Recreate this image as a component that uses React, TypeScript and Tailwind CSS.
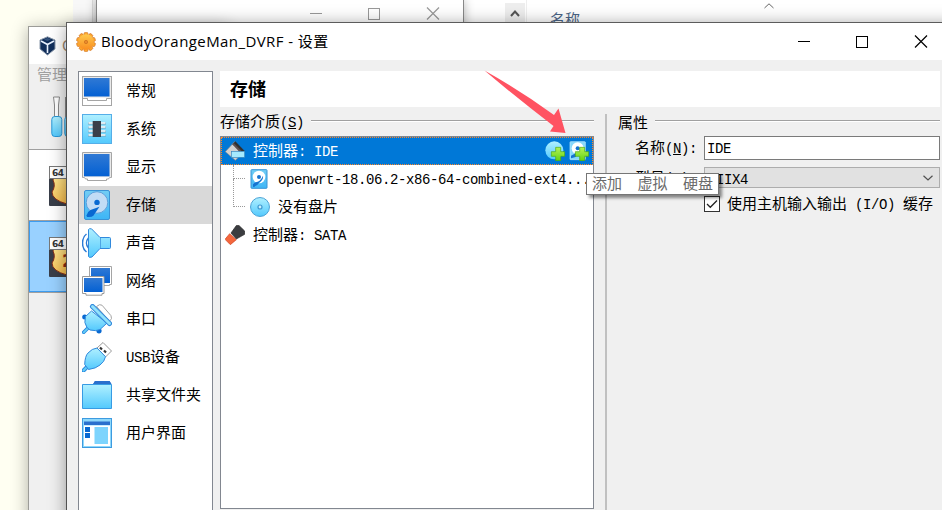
import React from "react";

type IconProps = { children: React.ReactNode; size?: string };

function Svg({ children, size = "h-[30px] w-[30px]" }: IconProps) {
  return (
    <svg viewBox="0 0 30 30" className={`${size} shrink-0`} fill="none">
      {children}
    </svg>
  );
}

function Defs() {
  return (
    <svg width="0" height="0" className="absolute">
      <defs>
        <linearGradient id="screen" x1="0" y1="0" x2="0" y2="1">
          <stop offset="0" stopColor="#3079d4" />
          <stop offset="1" stopColor="#0360d3" />
        </linearGradient>
        <linearGradient id="sky" x1="0" y1="0" x2="0" y2="1">
          <stop offset="0" stopColor="#b0f0ff" />
          <stop offset="1" stopColor="#53c9fd" />
        </linearGradient>
        <linearGradient id="deep" x1="0" y1="0" x2="0" y2="1">
          <stop offset="0" stopColor="#72cdf4" />
          <stop offset="1" stopColor="#3db5f6" />
        </linearGradient>
        <linearGradient id="gold" x1="0" y1="0" x2="1" y2="1">
          <stop offset="0" stopColor="#fff0a0" />
          <stop offset="1" stopColor="#f0a020" />
        </linearGradient>
        <linearGradient id="orange" x1="0" y1="0" x2="0" y2="1">
          <stop offset="0" stopColor="#ffc94d" />
          <stop offset="1" stopColor="#f98d20" />
        </linearGradient>
        <linearGradient id="green" x1="0" y1="0" x2="0" y2="1">
          <stop offset="0" stopColor="#b5f25a" />
          <stop offset="1" stopColor="#62d312" />
        </linearGradient>
      </defs>
    </svg>
  );
}

const GeneralIcon = () => (
  <Svg>
    <rect x=".5" y=".5" width="29" height="29" fill="#fff" stroke="#a5a5a5" />
    <path d="M1 22.5h4.5v2h19v-2H29" stroke="#a5a5a5" />
    <rect x="1.2" y="1.2" width="27.6" height="20.4" fill="#e4e4e4" />
    <rect x="2" y="2" width="25.5" height="18.5" fill="url(#screen)" />
  </Svg>
);
const SystemIcon = () => (
  <Svg>
    <rect x=".5" y=".5" width="29" height="29" fill="url(#sky)" stroke="#55aee8" />
    <path d="M6 9.5h18M6 13.5h18M6 17.5h18M6 21.5h18" stroke="#6fa3bd" strokeWidth="2" />
    <path d="M6.500 9h17M6.500 13h17M6.500 17h17M6.500 21h17" stroke="#fff" strokeWidth="1.300" />
    <rect x="10.7" y="7" width="8.3" height="16" fill="#3a3f4a" />
  </Svg>
);
const DisplayIcon = () => (
  <Svg>
    <path d="M.5.5h29v25h-2l-1 1.5h-2v1.5h-19V27H3.5l-1-1.5h-2z" fill="#fff" stroke="#a5a5a5" />
    <rect x="1.2" y="1.2" width="27.6" height="24" fill="#e4e4e4" />
    <rect x="2" y="2" width="25.5" height="22.3" fill="url(#screen)" />
  </Svg>
);
const StorageIcon = ({ size }: { size?: string }) => (
  <Svg size={size}>
    <rect x="2.5" y=".5" width="25" height="29" rx="1.5" fill="url(#deep)" stroke="#3b93d6" />
    <circle cx="15" cy="12.5" r="10.8" fill="#c2dcf5" stroke="#5c9fdc" />
    <circle cx="15" cy="12.4" r="2.7" fill="#0869d2" />
    <path d="M17.5 16.8 11.5 25.5Q10 27.5 5 27l-.5-1.5q1-4 4-5.5z" fill="#0869d2" />
  </Svg>
);
const AudioIcon = () => (
  <Svg>
    <path d="M4.5 6C-.8 10 -.8 20 4.5 24M6.5 10C3.8 13 3.8 17 6.5 20" stroke="#297ad6" strokeWidth="1.5" />
    <path d="M6.5 1.5Q7 .3 9.5.8L18 9.5h9.5q1 0 1 1v9q0 1-1 1H18L10 29q-3 1-3.5-.5z" fill="url(#sky)" stroke="#3189dc" />
    <path d="M18.5 10v10" stroke="#4ea5e5" />
  </Svg>
);
const NetworkIcon = () => (
  <Svg>
    <path d="M7.5.5h22v18h-2v1h-18v-1h-2z" fill="#fff" stroke="#a5a5a5" />
    <rect x="9" y="2" width="19" height="15" fill="url(#screen)" />
    <path d="M.5 10.5h21.5v17h-2v1.7H4v-1.7H.5z" fill="#fff" stroke="#9a9a9a" />
    <rect x="2" y="12" width="18.5" height="14" fill="url(#screen)" />
  </Svg>
);
const SerialIcon = () => (
  <Svg>
    <path d="m14.500 2.500 3-1.800 2.500.5 9 10.500.500 3-2 2.500z" fill="#fff" stroke="#a5a5a5" />
    <circle cx="2.7" cy="13" r="2.5" fill="#0869d2" />
    <circle cx="17" cy="26.8" r="2.6" fill="#0869d2" />
    <path d="m1.7 28.3 5-5" stroke="#298be0" strokeWidth="3.6" strokeLinecap="round" />
    <path d="m1.7 28.3 5-5" stroke="#65cef7" strokeWidth="1.800" strokeLinecap="round" />
    <path d="M9.500 7 3.500 12.500Q1.500 19 5 23.500L8 26q6 1.500 10-.5l7-6.500z" fill="url(#sky)" stroke="#3189dc" />
    <path d="M10.500 2.500 27.500 19.500" stroke="#3189dc" strokeWidth="5" strokeLinecap="round" />
    <path d="M10.500 2.500 27.500 19.500" stroke="#93e2fb" strokeWidth="3" strokeLinecap="round" />
  </Svg>
);
const UsbIcon = () => (
  <Svg>
    <path d="m15 6 6-5.5L29.5 9l-6 6z" fill="#fff" stroke="#999" />
    <path d="m18 5.500 2 2m2 1 2 2" stroke="#333" strokeWidth="2.2" />
    <path d="m1.5 28.5 4-4" stroke="#298be0" strokeWidth="4" strokeLinecap="round" />
    <path d="m1.5 28.5 4-4" stroke="#65cef7" strokeWidth="2" strokeLinecap="round" />
    <path d="M2.7 22.5Q3 14 6 11q4-4.5 9-5l8.5 8.7q-1 5-5.5 8.3-4 3.5-11.5 4.5z" fill="url(#sky)" stroke="#3189dc" />
  </Svg>
);
const FolderIcon = () => (
  <Svg>
    <path d="m11 4.500 2-3.500h14.500l2 3.500z" fill="#2a6fcc" />
    <path d="M.5 4.5h29v24H.5z" fill="url(#sky)" stroke="#379be4" />
    <path d="m11 4 2-3h14.500l2 3" fill="#2a6fcc" />
  </Svg>
);
const InterfaceIcon = () => (
  <Svg>
    <rect x=".5" y=".5" width="29" height="29" fill="#8ed8fb" stroke="#3d9be0" />
    <rect x="2" y="7.5" width="26" height="20.5" fill="#fff" />
    <rect x="2" y="3.5" width="26" height="3.5" fill="#2a70cd" />
    <rect x="3" y="9" width="5" height="5" fill="#0869d2" />
    <rect x="3" y="15" width="5" height="5" fill="#0869d2" />
    <rect x="12.5" y="9" width="13.5" height="17" fill="#7dd4fd" />
  </Svg>
);
const DiscIcon = () => (
  <Svg size="h-5 w-5">
    <circle cx="15" cy="15" r="14.2" fill="url(#sky)" stroke="#4ba2d6" strokeWidth="1.5" />
    <circle cx="15" cy="15" r="3" fill="#c9f0ff" stroke="#4199cf" strokeWidth="1.8" />
  </Svg>
);
const DriveIcon = () => (
  <Svg size="h-5 w-5">
    <rect x="3" y="1" width="24" height="28" rx="1" fill="url(#deep)" stroke="#3994d6" strokeWidth="1.5" />
    <circle cx="15" cy="12" r="9.5" fill="#fff" />
    <circle cx="15" cy="12" r="3" fill="#1673d0" />
    <path d="M21 10q1 6-6 11-3 5-9 6v-4q3-4 7-4 5-2 8-9z" fill="#1673d0" />
  </Svg>
);
const IdeIcon = () => (
  <Svg size="h-5 w-5">
    <path d="m.5 16 14-15 14.500 15-13.500 13z" fill="#d2d2d2" stroke="#8d8d8d" />
    <path d="m11 5 4.500-4.500L29.500 15l-5 1.500z" fill="#303030" />
    <path d="m11 5 2-2 12 12-3 2z" fill="#5d5050" />
    <rect x="9.500" y="15.500" width="20" height="9" fill="#a5eafe" stroke="#3584bd" />
  </Svg>
);
const SataIcon = () => (
  <Svg size="h-5 w-5">
    <path d="m7 13 10 9-9 7.5-8-8z" fill="#f4673d" stroke="#cf401e" />
    <path d="M9 12 17 .8h4L29.5 9v5L17 21z" fill="#3b3d40" stroke="#292929" />
  </Svg>
);
const Plus = () => <path d="M16 9.5h7.500v6.500h6v7h-6v6.500H16V23H9.500v-7H16z" fill="url(#green)" stroke="#4aa80e" />;
const AddDisc = () => (
  <Svg size="h-5 w-5">
    <circle cx="14" cy="14" r="13.5" fill="url(#sky)" />
    <Plus />
  </Svg>
);
const AddDrive = () => (
  <Svg size="h-5 w-5">
    <rect x="1.500" y="1" width="23" height="27" rx="1" fill="#87d8fb" stroke="#c0ecff" />
    <circle cx="13" cy="11" r="9" fill="#fff" />
    <circle cx="13" cy="11" r="3" fill="#1673d0" />
    <path d="m14 16-4 8-7 2v-4z" fill="#1673d0" />
    <Plus />
  </Svg>
);

function Gear() {
  const teeth = Array.from({ length: 10 }, (_, i) => i * 36);
  return (
    <Svg size="h-5 w-5">
      {teeth.map((a) => (
        <rect key={a} x="12" y=".7" width="6" height="8" rx="1.8" fill="#fba62d" stroke="#d27428" transform={`rotate(${a} 15 15)`} />
      ))}
      <circle cx="15" cy="15" r="11.7" fill="url(#orange)" />
      <circle cx="15" cy="15" r="2.500" fill="#e88a2a" stroke="#c96c20" />
    </Svg>
  );
}

function Mono({ children }: { children: React.ReactNode }) {
  return <span className="font-['Liberation_Mono',monospace] text-[14px] tracking-[-0.4px]">{children}</span>;
}

function WindowButtons({ tone, className }: { tone: string; className: string }) {
  return (
    <svg width="130" height="13" viewBox="0 0 130 13" className={className} fill="none" stroke={tone} shapeRendering="crispEdges">
      <path d="M0 6.5h12" />
      <rect x="58.5" y="1" width="11" height="11" />
      <path d="m117 .5 12 12m0-12-12 12" shapeRendering="auto" strokeWidth="1.2" />
    </svg>
  );
}

function Machine({ selected = false }: { selected?: boolean }) {
  return (
    <div className={selected ? "h-[71px] border border-[#3d9cf0] bg-[#99d1ff] pt-[15px] pl-[19px]" : "h-[71px] border-b border-[#a0a0a0] bg-white pt-4 pl-5"}>
      <svg width="40" height="40" viewBox="0 0 40 40">
        <rect y="0" width="40" height="40" rx="1" fill="#393e49" />
        <path d="M4 14Q5 5 20 4h20v34H18Q3 34 3 26q4-6 1-12z" fill="url(#gold)" stroke="#872d16" />
        {selected && <text x="13" y="30" fontSize="17" fontWeight="bold" fontFamily="DejaVu Sans" fill="#8b2c12">2</text>}
        <rect x=".5" y=".5" width="17" height="12" fill="#fff" stroke="#777" />
        <text x="3" y="10" fontSize="9" fontWeight="bold" fontFamily="DejaVu Sans" fill="#333" textLength="12">64</text>
      </svg>
    </div>
  );
}

function ManagerWindow() {
  return (
    <div className="absolute top-[26px] left-7 h-[500px] w-[200px] border border-[#9c9c98] bg-[#f0f0f0] shadow-[0_2px_16px_rgba(0,0,0,0.32)]">
      <div className="flex h-[37px] items-center gap-1.5 bg-white pl-2.5">
        <svg width="17" height="20" viewBox="0 0 17 20">
          <path d="M1 4 8.5.8 16 4v9l-7.5 6L1 13z" fill="#122f5b" stroke="#8c9aac" />
          <path d="m2 5 6.5 3.5L15 5M8.5 8.5V17" stroke="#e9f2ff" strokeWidth="1.6" fill="none" />
          <path d="m5 3.5 3.5 1.6L12 3.5 8.5 2z" fill="#35547e" />
        </svg>
        <span className="text-[15px] text-[#9a8770]">O</span>
      </div>
      <div className="h-[86px] border-b border-[#a0a0a0] pl-2">
        <div className="h-[31px] text-[15px] leading-[20px] text-[#a0a0a0]">管理</div>
        <svg width="32" height="44" viewBox="0 0 32 44" className="ml-3.5">
          <path d="M2.5 2h6l-1 8V23h-4V10z" fill="#fff" stroke="#888" />
          <rect x=".8" y="21.5" width="10" height="20" rx="3" fill="url(#sky)" stroke="#2897d8" />
          <rect x="14" y="2" width="6" height="20" fill="#888" />
          <rect x="13.8" y="21.5" width="10" height="20" rx="3" fill="url(#sky)" stroke="#2897d8" />
        </svg>
      </div>
      <Machine />
      <Machine selected />
      <div className="border-t border-[#a0a0a0]" />
    </div>
  );
}

const categories: [string, React.ReactNode][] = [
  ["常规", <GeneralIcon />],
  ["系统", <SystemIcon />],
  ["显示", <DisplayIcon />],
  ["存储", <StorageIcon />],
  ["声音", <AudioIcon />],
  ["网络", <NetworkIcon />],
  ["串口", <SerialIcon />],
  ["USB设备", <UsbIcon />],
  ["共享文件夹", <FolderIcon />],
  ["用户界面", <InterfaceIcon />],
];

function Sidebar() {
  return (
    <nav className="w-[135px] shrink-0 border border-b-0 border-[#828790] bg-white">
      {categories.map(([label, icon]) => (
        <div key={label} className={label === "存储" ? "flex h-[38px] items-center gap-3.5 bg-[#d9d9d9] pl-[3px]" : "flex h-[38px] items-center gap-3.5 pl-[3px]"}>
          {icon}
          <span className={label.startsWith("USB") ? "leading-5 whitespace-nowrap" : "mb-0.5 leading-5 whitespace-nowrap"}>
            {label.startsWith("USB") ? <><Mono>USB</Mono>设备</> : label}
          </span>
        </div>
      ))}
    </nav>
  );
}

function GroupTitle({ children, gap }: { children: React.ReactNode; gap: string }) {
  return (
    <div className={`flex h-[29px] items-center ${gap}`}>
      <span className="leading-5 whitespace-nowrap">{children}</span>
      <div className="mb-px h-0.5 flex-1 border-t border-[#a0a0a0] bg-white" />
    </div>
  );
}

function StorageTree() {
  return (
    <div className="h-[373px] border border-[#828790] bg-white">
      <div className="flex h-7 items-center border border-dotted border-[#ff8728] bg-[#0078d7] pl-[3px] text-white">
        <IdeIcon />
        <span className="ml-2 flex-1 leading-5 whitespace-nowrap">控制器<Mono>: IDE</Mono></span>
        <div className="mr-[3px] flex gap-1"><AddDisc /><AddDrive /></div>
      </div>
      <div className="flex">
        <div className="ml-3 w-[15px]">
          <div className="h-3.5 w-3 border-b border-l border-dotted border-[#999]" />
          <div className="h-7 w-3 border-b border-l border-dotted border-[#999]" />
        </div>
        <div className="flex-1 whitespace-nowrap">
          <div className="flex h-7 items-center gap-[9px] pl-px"><DriveIcon /><span className="leading-5"><Mono>openwrt-18.06.2-x86-64-combined-ext4...</Mono></span></div>
          <div className="flex h-7 items-center gap-2 pl-[2px]"><DiscIcon /><span className="mb-0.5 leading-5">没有盘片</span></div>
        </div>
      </div>
      <div className="flex h-7 items-center gap-2 pl-1">
        <SataIcon />
        <span className="leading-5">控制器<Mono>: SATA</Mono></span>
      </div>
    </div>
  );
}

function Attributes() {
  return (
    <section className="ml-[11px] flex-1">
      <GroupTitle gap="gap-[7px]">属性</GroupTitle>
      <div className="flex h-6 items-center">
        <span className="w-[86px] pl-[17px] leading-5 whitespace-nowrap">名称<Mono>(<u>N</u>):</Mono></span>
        <div className="flex h-6 flex-1 items-center border border-[#7a7a7a] bg-white pt-0.5 pl-[2px]"><Mono>IDE</Mono></div>
      </div>
      <div className="mt-[7px] flex h-[21px] items-center">
        <span className="w-[86px] pl-[17px] leading-5 whitespace-nowrap">型号<Mono>(<u>T</u>):</Mono></span>
        <div className="flex h-[21px] flex-1 items-center justify-between border border-[#adadad] bg-[#e1e1e1] pr-1.5 pl-[3px]">
          <span className="pt-0.5 leading-5"><Mono>PIIX4</Mono></span>
          <svg width="10" height="6" viewBox="0 0 10 6" fill="none" stroke="#505050" strokeWidth="1.2"><path d="m.5.7 4.5 4.2L9.5.7" /></svg>
        </div>
      </div>
      <div className="mt-2 flex h-4 items-center gap-[7px] pl-[86px]">
        <svg width="16" height="16" viewBox="0 0 16 16" className="shrink-0"><rect x=".5" y=".5" width="15" height="15" fill="#fff" stroke="#333" /><path d="m3 8 3.3 3.3L13 4.5" fill="none" stroke="#222" strokeWidth="1.3" /></svg>
        <span className="leading-5 whitespace-nowrap">使用主机输入输出<Mono> (I/O) </Mono>缓存</span>
      </div>
    </section>
  );
}

function SettingsDialog() {
  return (
    <div className="absolute top-[22px] left-[67px] flex h-[520px] w-[900px] flex-col border-t border-[#5c5c5c] bg-[#f0f0f0] shadow-[0_3px_17px_rgba(0,0,0,0.42),-1px_0_0_#666]">
      <header className="flex h-[37px] shrink-0 items-center bg-white pl-[9px]">
        <Gear />
        <h1 className="mb-0.5 ml-[5px] w-[697px] text-[15px] leading-5 font-normal tracking-[0.42px] whitespace-pre font-['Open_Sans','Noto_Sans_CJK_SC',sans-serif]">BloodyOrangeMan_DVRF - 设置</h1>
        <WindowButtons tone="#000" className="mb-px shrink-0" />
      </header>
      <div className="flex flex-1 pt-[11px] pl-[11px]">
        <Sidebar />
        <main className="ml-[7px] w-[720px]">
          <h2 className="h-9 bg-white pl-[10px] text-[18px] leading-[34px] font-bold">存储</h2>
          <div className="flex">
            <section className="w-[374px]">
              <GroupTitle gap="gap-[7px]">存储介质<Mono>(<u>S</u>)</Mono></GroupTitle>
              <StorageTree />
            </section>
            <div className="mt-[7px] ml-[11px] h-[400px] w-0.5 bg-[#c0c0c0]" />
            <Attributes />
          </div>
        </main>
      </div>
    </div>
  );
}

export default function App() {
  return (
    <div className="relative h-[510px] w-[942px] overflow-hidden bg-[#fffff2] font-['Noto_Sans_CJK_SC',sans-serif] text-[15px] text-black">
      <Defs />
      <div className="ml-[73px] flex h-[60px] bg-white">
        <div className="w-[19px] bg-[#f8f8f8]" />
        <div className="w-1 border-l border-[#ddd] bg-[#f0f0f0]" />
        <div className="w-[368px] border-x border-[#888] bg-white pt-[7px] pl-[213px] shadow-[0_0_10px_rgba(0,0,0,0.3)]">
          <WindowButtons tone="#999" className="" />
        </div>
        <div className="ml-10 flex h-6 w-[23px] justify-center border-r border-[#eee] pt-[3px]">
          <div className="flex h-6 w-5 items-center justify-center bg-[#eee] pb-1">
            <svg width="10" height="7" viewBox="0 0 10 7" fill="none" stroke="#555" strokeWidth="2"><path d="m1 6 4-4.5L9 6" /></svg>
          </div>
        </div>
        <span className="ml-[23px] pt-[9px] leading-5 text-[#4b6486]">名称</span>
        <svg width="10" height="6" viewBox="0 0 10 6" fill="none" stroke="#666" className="mt-[3px] ml-[184px]"><path d="m.5 5 4.5-4.2L9.5 5" /></svg>
      </div>
      <ManagerWindow />
      <SettingsDialog />
      <svg width="84" height="66" viewBox="0 0 84 66" className="absolute top-[69px] left-[483px]"><path d="M1.5 1.5 Q38 22 71 46l4.500-6.500 7 24.500-15.500-1.500 3.500-5.500Q34 29 1.500 1.500Z" fill="#ff5362" /></svg>
      <div className="absolute top-[173px] left-[586px] flex h-[22px] w-[133px] items-center justify-between border border-[#767676] bg-white px-[5px] pb-[3px] leading-[18px] text-[#6a6a6a] shadow-[3px_3px_3px_rgba(0,0,0,0.45)]">
        <span>添加</span><span>虚拟</span><span>硬盘</span>
      </div>
    </div>
  );
}
